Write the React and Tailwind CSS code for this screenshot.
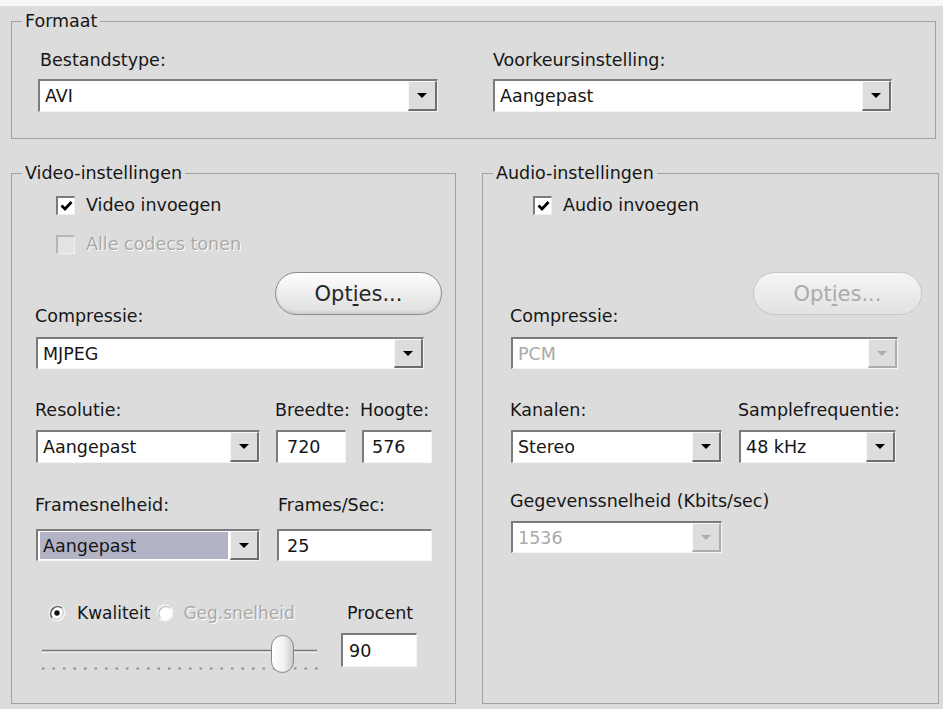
import React from "react";

const disabledText = "text-[#a9a9a9] [text-shadow:1px_1px_0_#ffffff]";

function Triangle({ disabled }) {
  return (
    <span
      className={`block w-0 h-0 border-x-[5px] border-x-transparent border-t-[5px] ${
        disabled ? "border-t-[#ababab]" : "border-t-black"
      }`}
    />
  );
}

// sunken white combobox with a raised drop button
function Combo({ value, className = "", disabled, selected }) {
  return (
    <div
      className={`flex bg-white border-t-2 border-l-2 border-b border-r border-t-[#7c7c7c] border-l-[#7c7c7c] border-b-[#f4f4f4] border-r-[#f4f4f4] ${className}`}
    >
      <div className="flex flex-1 min-w-0 py-[1px] pl-[2px]">
        <span
          className={`flex flex-1 items-center pl-[3px] whitespace-nowrap ${
            selected ? "bg-[#b3b3c6] mr-[2px]" : ""
          } ${disabled ? "text-[#a9a9a9]" : "text-[#161616]"}`}
        >
          {value}
        </span>
      </div>
      <div
        className={`w-[29px] flex items-center justify-center bg-[#dddddd] border-t border-l border-t-[#f8f8f8] border-l-[#f8f8f8] border-b-2 border-r-2 ${
          disabled ? "border-b-[#acacac] border-r-[#acacac]" : "border-b-[#6e6e6e] border-r-[#6e6e6e]"
        }`}
      >
        <Triangle disabled={disabled} />
      </div>
    </div>
  );
}

function Field({ value, className = "" }) {
  return (
    <div
      className={`flex items-center bg-white border-t-2 border-l-2 border-b border-r border-t-[#7c7c7c] border-l-[#7c7c7c] border-b-[#f4f4f4] border-r-[#f4f4f4] ${className}`}
    >
      {value}
    </div>
  );
}

function CheckBox({ checked, disabled }) {
  return (
    <span
      className={`flex shrink-0 items-center justify-center w-[19px] h-[19px] border-t-2 border-l-2 border-b border-r ${
        disabled
          ? "bg-[#e3e3e3] border-t-[#b6b6b6] border-l-[#b6b6b6] border-b-[#f2f2f2] border-r-[#f2f2f2]"
          : "bg-white border-t-[#7a7a7a] border-l-[#7a7a7a] border-b-[#eeeeee] border-r-[#eeeeee]"
      }`}
    >
      {checked && (
        <svg width="13" height="12" viewBox="0 0 13 12">
          <path d="M1.5 5.5 L5 9 L11.5 2" stroke="#000" strokeWidth="2.8" fill="none" />
        </svg>
      )}
    </span>
  );
}

function Radio({ checked, disabled }) {
  return (
    <svg width="18" height="18" viewBox="0 0 18 18" className="shrink-0">
      <circle cx="9" cy="9" r="8.5" fill="#f4f4f4" />
      <circle cx="9" cy="9" r="7" fill="#ffffff" />
      <path
        d="M4.1 13.9 A7 7 0 0 1 13.9 4.1"
        stroke={disabled ? "#c9c9c9" : "#6a6a6a"}
        strokeWidth="1.8"
        fill="none"
      />
      {!disabled && (
        <path d="M13.9 4.1 A7 7 0 0 1 4.1 13.9" stroke="#b9b9b9" strokeWidth="1" fill="none" />
      )}
      {checked && <circle cx="9" cy="9" r="2.7" fill="#111111" />}
    </svg>
  );
}

function OptionsButton({ disabled, className = "" }) {
  return (
    <div
      className={`flex items-center justify-center rounded-full border h-[43px] text-[21px] bg-linear-to-b ${
        disabled
          ? "border-[#c6c6c6] from-[#f5f5f5] to-[#e2e2e2] text-[#ababab]"
          : "border-[#8c8c8c] from-[#fefefe] to-[#dedede] text-[#262626] shadow-[inset_0_-2px_3px_rgba(0,0,0,0.08)]"
      } ${className}`}
    >
      Opt<span className="underline underline-offset-[3px]">i</span>es...
    </div>
  );
}

function Slider() {
  const dots = [];
  for (let i = 0; i < 27; i++) dots.push(2 + i * 10.5);
  return (
    <svg width="280" height="42" viewBox="0 0 280 42">
      <defs>
        <linearGradient id="thumb" x1="0" y1="0" x2="1" y2="0">
          <stop offset="0" stopColor="#ffffff" />
          <stop offset="0.55" stopColor="#f2f2f2" />
          <stop offset="1" stopColor="#c9c9c9" />
        </linearGradient>
      </defs>
      <line x1="2" y1="17.5" x2="277" y2="17.5" stroke="#7a7a7a" strokeWidth="1.5" />
      <line x1="2" y1="19.3" x2="277" y2="19.3" stroke="#f6f6f6" strokeWidth="1" />
      {dots.map((x) => (
        <rect key={x} x={x} y="34.5" width="2.5" height="2" fill="#8e8e8e" />
      ))}
      <rect x="231.5" y="2.5" width="22" height="37" rx="11" fill="url(#thumb)" stroke="#858585" />
    </svg>
  );
}

export default function App() {
  return (
    <div className="w-[943px] h-[709px] overflow-hidden bg-[#dcdcdc] font-['DejaVu_Sans',sans-serif] text-[17.5px] leading-[20px] text-[#161616]">
      <div className="h-[6px] bg-[#f7f7f7]" />

      {/* Formaat */}
      <fieldset className="ml-[11px] mt-[5px] w-[925px] h-[128px] border border-[#a2a2a2]">
        <legend className="ml-[10px] px-[3px] leading-[20px]">Formaat</legend>
        <div className="flex pt-[19px]">
          <div className="ml-[26px] w-[400px]">
            <div className="pl-[2px]">Bestandstype:</div>
            <Combo value="AVI" className="mt-[9px] w-[400px] h-[33px]" />
          </div>
          <div className="ml-[55px] w-[399px]">
            <div>Voorkeursinstelling:</div>
            <Combo value="Aangepast" className="mt-[9px] w-[399px] h-[33px]" />
          </div>
        </div>
      </fieldset>

      <div className="flex mt-[24px] ml-[11px]">
        {/* Video-instellingen */}
        <fieldset className="w-[445px] h-[541px] border border-[#a2a2a2]">
          <legend className="ml-[10px] px-[3px] leading-[20px]">Video-instellingen</legend>
          <div className="pt-[12px]">
            <div className="flex items-center h-[20px] ml-[44px]">
              <CheckBox checked />
              <span className="ml-[11px]">Video invoegen</span>
            </div>
            <div className="flex items-center h-[20px] ml-[44px] mt-[19px]">
              <CheckBox disabled />
              <span className={`ml-[11px] ${disabledText}`}>Alle codecs tonen</span>
            </div>
            <div className="flex h-[54px] mt-[18px]">
              <div className="w-[263px] pl-[23px] mt-[34px]">Compressie:</div>
              <OptionsButton className="w-[167px]" />
            </div>
            <Combo value="MJPEG" className="mt-[11px] ml-[24px] w-[388px] h-[32px]" />

            <div className="flex mt-[31px] whitespace-nowrap">
              <div className="w-[263px] pl-[23px]">Resolutie:</div>
              <div className="w-[85px]">Breedte:</div>
              <div>Hoogte:</div>
            </div>
            <div className="flex mt-[10px] ml-[24px]">
              <Combo value="Aangepast" className="w-[224px] h-[33px]" />
              <Field value="720" className="ml-[16px] w-[70px] h-[33px] pl-[9px]" />
              <Field value="576" className="ml-[16px] w-[70px] h-[33px] pl-[8px]" />
            </div>

            <div className="flex mt-[32px] whitespace-nowrap">
              <div className="w-[266px] pl-[23px]">Framesnelheid:</div>
              <div>Frames/Sec:</div>
            </div>
            <div className="flex mt-[14px] ml-[24px]">
              <Combo value="Aangepast" selected className="w-[224px] h-[32px]" />
              <Field value="25" className="ml-[17px] w-[155px] h-[32px] pl-[8px]" />
            </div>

            <div className="flex mt-[42px]">
              <div className="w-[329px]">
                <div className="flex items-center h-[20px] pl-[36px] text-[17px] whitespace-nowrap">
                  <Radio checked />
                  <span className="ml-[11px]">Kwaliteit</span>
                  <span className="ml-[6px]">
                    <Radio disabled />
                  </span>
                  <span className={`ml-[9px] ${disabledText}`}>Geg.snelheid</span>
                </div>
                <div className="mt-[10px] ml-[28px]">
                  <Slider />
                </div>
              </div>
              <div>
                <div className="pl-[6px]">Procent</div>
                <Field value="90" className="mt-[10px] w-[76px] h-[34px] pl-[6px]" />
              </div>
            </div>
          </div>
        </fieldset>

        {/* Audio-instellingen */}
        <fieldset className="ml-[26px] w-[457px] h-[541px] border border-[#a2a2a2]">
          <legend className="ml-[10px] px-[3px] leading-[20px]">Audio-instellingen</legend>
          <div className="pt-[12px]">
            <div className="flex items-center h-[20px] ml-[50px]">
              <CheckBox checked />
              <span className="ml-[11px]">Audio invoegen</span>
            </div>
            <div className="flex h-[54px] mt-[57px]">
              <div className="w-[270px] pl-[27px] mt-[34px]">Compressie:</div>
              <OptionsButton disabled className="w-[169px]" />
            </div>
            <Combo value="PCM" disabled className="mt-[11px] ml-[28px] w-[387px] h-[32px]" />

            <div className="flex mt-[31px] whitespace-nowrap">
              <div className="w-[255px] pl-[27px]">Kanalen:</div>
              <div>Samplefrequentie:</div>
            </div>
            <div className="flex mt-[10px] ml-[28px]">
              <Combo value="Stereo" className="w-[211px] h-[33px]" />
              <Combo value="48 kHz" className="ml-[17px] w-[157px] h-[33px]" />
            </div>

            <div className="mt-[28px] pl-[27px] whitespace-nowrap">Gegevenssnelheid (Kbits/sec)</div>
            <Combo value="1536" disabled className="mt-[10px] ml-[28px] w-[211px] h-[32px]" />
          </div>
        </fieldset>
      </div>
    </div>
  );
}
